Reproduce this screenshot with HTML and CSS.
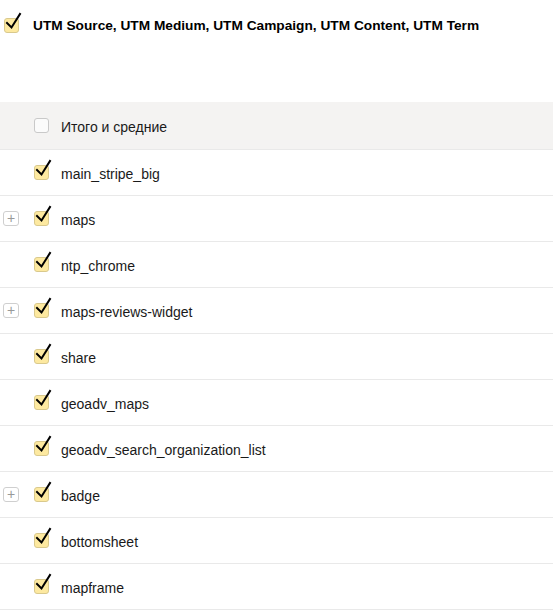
FILE: index.html
```html
<!DOCTYPE html>
<html lang="ru">
<head>
<meta charset="utf-8">
<link rel="stylesheet" href="styles.css">
</head>
<body>
<div class="page">
  <div class="header">
    <span class="cb checked"><svg class="tick" viewBox="0 0 18 20"><path d="M3 11 L7.5 15.5 L16 2"/></svg></span>
    <span class="title">UTM Source, UTM Medium, UTM Campaign, UTM Content, UTM Term</span>
  </div>
  <div class="table">
    <div class="row total">
      <span class="exp-slot"></span>
      <span class="cb"></span>
      <span class="label">Итого и средние</span>
    </div>
    <div class="row"><span class="exp-slot"></span><span class="cb checked"><svg class="tick" viewBox="0 0 18 20"><path d="M3 11 L7.5 15.5 L16 2"/></svg></span><span class="label">main_stripe_big</span></div>
    <div class="row"><span class="exp-slot"><span class="exp">+</span></span><span class="cb checked"><svg class="tick" viewBox="0 0 18 20"><path d="M3 11 L7.5 15.5 L16 2"/></svg></span><span class="label">maps</span></div>
    <div class="row"><span class="exp-slot"></span><span class="cb checked"><svg class="tick" viewBox="0 0 18 20"><path d="M3 11 L7.5 15.5 L16 2"/></svg></span><span class="label">ntp_chrome</span></div>
    <div class="row"><span class="exp-slot"><span class="exp">+</span></span><span class="cb checked"><svg class="tick" viewBox="0 0 18 20"><path d="M3 11 L7.5 15.5 L16 2"/></svg></span><span class="label">maps-reviews-widget</span></div>
    <div class="row"><span class="exp-slot"></span><span class="cb checked"><svg class="tick" viewBox="0 0 18 20"><path d="M3 11 L7.5 15.5 L16 2"/></svg></span><span class="label">share</span></div>
    <div class="row"><span class="exp-slot"></span><span class="cb checked"><svg class="tick" viewBox="0 0 18 20"><path d="M3 11 L7.5 15.5 L16 2"/></svg></span><span class="label">geoadv_maps</span></div>
    <div class="row"><span class="exp-slot"></span><span class="cb checked"><svg class="tick" viewBox="0 0 18 20"><path d="M3 11 L7.5 15.5 L16 2"/></svg></span><span class="label">geoadv_search_organization_list</span></div>
    <div class="row"><span class="exp-slot"><span class="exp">+</span></span><span class="cb checked"><svg class="tick" viewBox="0 0 18 20"><path d="M3 11 L7.5 15.5 L16 2"/></svg></span><span class="label">badge</span></div>
    <div class="row"><span class="exp-slot"></span><span class="cb checked"><svg class="tick" viewBox="0 0 18 20"><path d="M3 11 L7.5 15.5 L16 2"/></svg></span><span class="label">bottomsheet</span></div>
    <div class="row"><span class="exp-slot"></span><span class="cb checked"><svg class="tick" viewBox="0 0 18 20"><path d="M3 11 L7.5 15.5 L16 2"/></svg></span><span class="label">mapframe</span></div>
  </div>
</div>
</body>
</html>
```
FILE: styles.css
```css
html, body {
  margin: 0;
  padding: 0;
  background: #fff;
}
body {
  font-family: "Liberation Sans", Arial, sans-serif;
  color: #111;
}
.page {
  width: 553px;
}
.header {
  display: flex;
  align-items: center;
  height: 50px;
  padding-left: 4px;
  gap: 14px;
}
.title {
  font-weight: bold;
  font-size: 13.7px;
  color: #000;
  margin-top: 0;
}
.table {
  margin-top: 52px;
}
.row {
  display: flex;
  align-items: center;
  height: 45px;
  border-bottom: 1px solid #e9e9e9;
  padding-left: 3px;
}
.row.total {
  background: #f4f3f2;
  height: 47px;
}
.exp-slot {
  width: 31px;
  display: flex;
  align-items: center;
}
.exp {
  box-sizing: border-box;
  width: 16px;
  height: 15px;
  border: 1px solid #cfcfcf;
  border-radius: 3px;
  color: #999;
  font-size: 14px;
  line-height: 12px;
  text-align: center;
  background: #fff;
}
.cb {
  position: relative;
  box-sizing: border-box;
  width: 15px;
  height: 15px;
  border: 1px solid #d2c9a8;
  border-radius: 3px;
  background: #fff;
  flex: none;
}
.cb.checked {
  background: #fde9a0;
  border-color: #d9c98d;
}
.row.total .cb {
  border-color: #c9c9c9;
  background: #fbfbfb;
}
.tick {
  position: absolute;
  left: -1px;
  top: -7px;
  width: 18px;
  height: 20px;
  overflow: visible;
}
.tick path {
  fill: none;
  stroke: #000;
  stroke-width: 2;
  stroke-linecap: square;
  stroke-linejoin: miter;
}
.label {
  font-size: 14px;
  margin-left: 12px;
  margin-top: 3px;
  color: #1a1a1a;
}
```
